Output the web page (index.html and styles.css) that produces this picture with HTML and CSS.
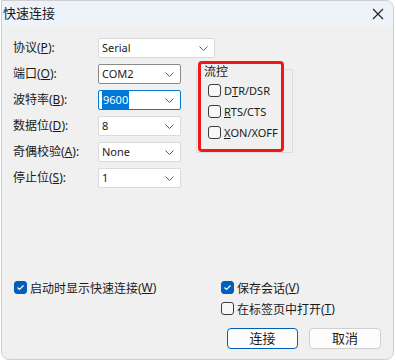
FILE: index.html
```html
<!DOCTYPE html>
<html lang="zh">
<head>
  <meta charset="UTF-8" />
  <title>快速连接</title>
  <link rel="stylesheet" href="styles.css">
</head>
<body>
  <div class="window">
    <div class="titlebar">
      <span class="title">快速连接</span>
      <svg class="close" width="12" height="12" viewBox="0 0 12 12">
        <path d="M1 1 L11 11 M11 1 L1 11" stroke="#1f1f1f" stroke-width="1.1" fill="none" />
      </svg>
    </div>

    <div class="content">
      <div class="form">
        <div class="label">协议(<u>P</u>):</div>
        <div class="combo combo-wide">
          <span>Serial</span>
          <svg class="chev" width="9" height="5" viewBox="0 0 9 5"><polyline points="0.5,0.5 4.5,4.5 8.5,0.5" /></svg>
        </div>

        <div class="label">端口(<u>O</u>):</div>
        <div class="combo combo-hover">
          <span>COM2</span>
          <svg class="chev" width="9" height="5" viewBox="0 0 9 5"><polyline points="0.5,0.5 4.5,4.5 8.5,0.5" /></svg>
        </div>

        <div class="label">波特率(<u>B</u>):</div>
        <div class="combo combo-focus">
          <span class="selected">9600</span>
          <svg class="chev" width="9" height="5" viewBox="0 0 9 5"><polyline points="0.5,0.5 4.5,4.5 8.5,0.5" /></svg>
        </div>

        <div class="label">数据位(<u>D</u>):</div>
        <div class="combo">
          <span>8</span>
          <svg class="chev" width="9" height="5" viewBox="0 0 9 5"><polyline points="0.5,0.5 4.5,4.5 8.5,0.5" /></svg>
        </div>

        <div class="label">奇偶校验(<u>A</u>):</div>
        <div class="combo">
          <span>None</span>
          <svg class="chev" width="9" height="5" viewBox="0 0 9 5"><polyline points="0.5,0.5 4.5,4.5 8.5,0.5" /></svg>
        </div>

        <div class="label">停止位(<u>S</u>):</div>
        <div class="combo">
          <span>1</span>
          <svg class="chev" width="9" height="5" viewBox="0 0 9 5"><polyline points="0.5,0.5 4.5,4.5 8.5,0.5" /></svg>
        </div>

        <div class="group">
          <div class="mark">
            <div class="legend">流控</div>
            <div class="check"><span class="box"></span>D<u>T</u>R/DSR</div>
            <div class="check"><span class="box"></span><u>R</u>TS/CTS</div>
            <div class="check"><span class="box"></span><u>X</u>ON/XOFF</div>
          </div>
        </div>
      </div>

      <div class="footer">
        <div class="check check-row">
          <span class="box box-on"><svg width="11" height="11" viewBox="0 0 11 11"><polyline points="2.5,5.5 4.5,7.5 8.5,3.5" /></svg></span>启动时显示快速连接(<u>W</u>)
        </div>
        <div class="footer-right">
          <div class="check check-row">
            <span class="box box-on"><svg width="11" height="11" viewBox="0 0 11 11"><polyline points="2.5,5.5 4.5,7.5 8.5,3.5" /></svg></span>保存会话(<u>V</u>)
          </div>
          <div class="check check-row">
            <span class="box"></span>在标签页中打开(<u>T</u>)
          </div>
          <div class="buttons">
            <button class="btn btn-default">连接</button>
            <button class="btn">取消</button>
          </div>
        </div>
      </div>
    </div>
  </div>
</body>
</html>
```

FILE: styles.css
```css
html, body {
  margin: 0;
  padding: 0;
  background: #ffffff;
}

body {
  font-family: "Noto Sans", "Noto Sans CJK SC", sans-serif;
  font-size: 12px;
  color: #1a1a1a;
}

.window {
  margin-left: 1px;
  width: 391px;
  height: 358px;
  border: 1px solid #cfcfcf;
  border-radius: 0 8px 8px 8px;
  background: #f0f0f0;
  overflow: hidden;
  display: flex;
  flex-direction: column;
}

.titlebar {
  height: 25px;
  flex: none;
  background: #eef3f9;
  display: flex;
  align-items: center;
  padding-left: 1px;
  padding-right: 9px;
}

.title {
  font-size: 13px;
  line-height: 25px;
  flex: 1;
}

.close {
  display: block;
}

.content {
  flex: 1;
  display: flex;
  flex-direction: column;
}

/* 上半部分：参数表单 */
.form {
  display: grid;
  grid-template-columns: 85px 83px 15px 97px;
  grid-auto-rows: 20px;
  row-gap: 6px;
  padding: 12px 0 0 11px;
}

.label {
  grid-column: 1;
  line-height: 20px;
  white-space: nowrap;
}

.combo {
  grid-column: 2;
  position: relative;
  background: #ffffff;
  border: 1px solid #dadada;
  border-radius: 2px;
  font-size: 11px;
  line-height: 18px;
  padding-left: 3px;
  box-sizing: border-box;
}

.combo-wide {
  grid-column: 2 / 5;
  width: 117px;
}

.combo-hover {
  border-color: #8a8a8a;
}

.combo-focus {
  border-color: #0078d4;
}

.combo .selected {
  background: #0078d7;
  color: #ffffff;
  padding: 2px 1px 2px 1px;
}

.chev {
  position: absolute;
  right: 6px;
  top: 7px;
  fill: none;
  stroke: #5a5a5a;
  stroke-width: 1;
}

/* 流控分组 */
.group {
  grid-column: 4;
  grid-row: 2 / 6;
  align-self: start;
  position: relative;
  margin-top: 5px;
  height: 84px;
  border: 1px solid #dcdcdc;
  box-sizing: border-box;
}

.mark {
  position: absolute;
  left: 1px;
  top: -9px;
  width: 86px;
  height: 91px;
  box-sizing: border-box;
  border: 3px solid #f01818;
  border-radius: 4px;
  background: #f0f0f0;
  padding: 0 0 0 3px;
}

.legend {
  line-height: 16px;
}

.mark .check {
  padding-left: 4px;
  height: 21px;
  font-size: 11px;
}

.check {
  display: flex;
  align-items: center;
  white-space: nowrap;
}

.box {
  width: 13px;
  height: 13px;
  box-sizing: border-box;
  border: 1px solid #3c3c3c;
  border-radius: 3px;
  background: #f7f7f7;
  margin-right: 3px;
  flex: none;
  display: flex;
  align-items: center;
  justify-content: center;
}

.box-on {
  background: #005fb8;
  border-color: #005fb8;
}

.box-on svg {
  fill: none;
  stroke: #ffffff;
  stroke-width: 1.2;
}

/* 底部 */
.footer {
  margin-top: auto;
  display: flex;
  align-items: flex-start;
  padding: 0 10px 10px 12px;
}

.check-row {
  height: 21px;
}

.footer-right {
  margin-left: auto;
  width: 162px;
}

.buttons {
  display: flex;
  gap: 11px;
  margin-top: 9px;
  padding-left: 6px;
}

.btn {
  font-family: inherit;
  font-size: 13px;
  line-height: 19px;
  height: 21px;
  width: 72px;
  padding: 0;
  background: #fdfdfd;
  border: 1px solid #d0d0d0;
  border-radius: 4px;
  color: #1a1a1a;
}

.btn-default {
  width: 71px;
  border-color: #005fb8;
}
```
